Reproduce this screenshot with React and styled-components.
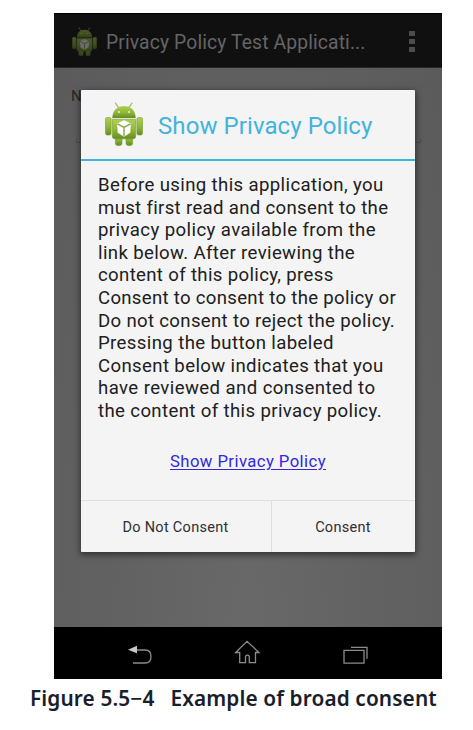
import React from 'react';
import styled, { createGlobalStyle } from 'styled-components';

const GlobalStyle = createGlobalStyle`
  * { box-sizing: border-box; }
  body { margin: 0; background: #fff; overflow: hidden; }
`;

const Page = styled.main`
  width: 473px;
  height: 730px;
  padding: 13px 0 0 54px;
  background: #fff;
  font-family: Roboto, 'Liberation Sans', sans-serif;
`;

const Phone = styled.section`
  position: relative;
  display: flex;
  flex-direction: column;
  width: 387.5px;
  height: 665.5px;
  background: #000;
`;

const ActionBar = styled.header`
  display: flex;
  align-items: center;
  height: 55px;
  padding: 2px 27px 0 18px;
  background: #101010;
  border-top: 1px solid #000;
  border-bottom: 1px solid #272727;
`;

const AppTitle = styled.h1`
  flex: 1;
  margin: 2px 0 0 9px;
  color: #656565;
  font-size: 19.3px;
  font-weight: 400;
  line-height: 24px;
  letter-spacing: ${({ $spacing }) => $spacing}px;
  white-space: nowrap;
`;

const Overflow = styled.div`
  display: grid;
  gap: 3px;
`;

const OverflowDot = styled.i`
  width: 6px;
  height: 5px;
  background: #4c4c4c;
`;

const Content = styled.div`
  flex: 1;
  padding: 18px 17px 0;
  background: radial-gradient(ellipse at 50% 100%, #686868 0%, #616161 55%, #5b5b5b 100%);
`;

const FieldLabel = styled.div`
  color: #262626;
  font-size: 15px;
  line-height: 20px;
`;

const FieldLine = styled.div`
  height: 4px;
  margin: 33px 4px 0 5px;
  border: 1px solid #4c4c4c;
  border-top: 0;
`;

const NavBar = styled.nav`
  height: 51.5px;
  background: #000;
`;

const NavIcons = styled.svg`
  display: block;
  width: 387px;
  height: 51px;
  fill: none;
  stroke: #8c8c8c;
  stroke-width: 1.3;
`;

const Dialog = styled.section`
  position: absolute;
  left: 27px;
  top: 77px;
  display: flex;
  flex-direction: column;
  width: 334px;
  height: 461.5px;
  background: #f4f4f4;
  border-radius: 1px;
  box-shadow: 0 2px 6px 1px rgba(0, 0, 0, 0.5);
`;

const DialogHeader = styled.header`
  display: flex;
  align-items: center;
  height: 71px;
  padding-left: 24px;
  border-bottom: 2px solid #3fb4df;
`;

const DialogTitle = styled.h2`
  margin: 2px 0 0 15px;
  color: #43b3dc;
  font-size: 24px;
  font-weight: 400;
  line-height: 30px;
  letter-spacing: 0.08px;
  white-space: nowrap;
`;

const DialogBody = styled.div`
  flex: 1;
  padding: 13px 17px 0;
`;

const Message = styled.p`
  margin: 0;
  color: #202020;
  font-size: 18.6px;
  line-height: 22.6px;
`;

const MessageLine = styled.span`
  display: block;
  white-space: nowrap;
  letter-spacing: ${({ $spacing }) => $spacing}px;
`;

const PolicyLink = styled.a`
  display: block;
  margin-top: 28px;
  color: #3128e0;
  font-size: 16.7px;
  line-height: 22px;
  letter-spacing: 0.42px;
  text-align: center;
  text-decoration: underline;
  text-underline-offset: 2px;
`;

const Actions = styled.footer`
  display: grid;
  grid-template-columns: 191px 1fr;
  height: 52px;
  border-top: 1px solid #dedede;
`;

const ActionButton = styled.button`
  padding: 3px 1px 0 0;
  border: 0;
  border-right: ${({ $divided }) => ($divided ? '1px solid #dedede' : '0')};
  background: transparent;
  color: #303030;
  font: 14.5px Roboto, 'Liberation Sans', sans-serif;
  letter-spacing: ${({ $spacing }) => $spacing}px;
`;

const Caption = styled.p`
  display: flex;
  gap: 16px;
  margin: 6px 0 0 -24px;
  color: #17202a;
  font: 600 20.8px 'Noto Sans', sans-serif;
  line-height: 27px;
  letter-spacing: 0.12px;
  white-space: nowrap;
`;

const Robot = styled.svg`
  flex: none;
  display: block;
  width: ${({ $width }) => $width}px;
  height: ${({ $width }) => $width * 1.16}px;
  opacity: ${({ $dim }) => ($dim ? 0.38 : 1)};
`;

function AndroidIcon({ id, width, dim }) {
  return (
    <Robot $width={width} $dim={dim} viewBox="0 0 38 44" aria-hidden="true">
      <defs>
        <linearGradient id={id} x1="0" y1="0" x2="0" y2="1">
          <stop offset="0" stopColor="#afd052" />
          <stop offset="0.55" stopColor="#8eb735" />
          <stop offset="1" stopColor="#668a26" />
        </linearGradient>
      </defs>
      <path d="M10.5 1l3.4 5M27 1l-3.5 5" stroke="#a5bf65" strokeWidth="1.3" strokeLinecap="round" />
      <path d="M7.3 16C7.5 8.2 12.6 4 19 4s11.5 4.2 11.7 12z" fill={`url(#${id})`} />
      <circle cx="14" cy="10" r="1" fill="#edf4d4" />
      <circle cx="24" cy="10" r="1" fill="#edf4d4" />
      <g fill={`url(#${id})`} stroke="#779b32" strokeWidth="0.6">
        <rect x="0.5" y="15.5" width="5.6" height="17.5" rx="1.7" />
        <rect x="31.9" y="15.5" width="5.6" height="17.5" rx="1.7" />
        <rect x="10.4" y="30" width="6.6" height="13.5" rx="2.3" />
        <rect x="21" y="30" width="6.6" height="13.5" rx="2.3" />
        <path d="M7.3 17.2h23.4v17q0 2.6-2.6 2.6H9.9q-2.6 0-2.6-2.6z" />
      </g>
      <path d="M19 18.3l7 3.2-.8 9.3-6.2 4-6.2-4-.8-9.3z" fill="#fff" />
      <path d="M12.4 21.8L19 25.4l6.6-3.6M19 25.4v8.8" fill="none" stroke="#88a746" strokeWidth="1.4" />
    </Robot>
  );
}

const messageLines = [
  ['Before using this application, you', 0.37],
  ['must first read and consent to the', 0.32],
  ['privacy policy available from the', 0.41],
  ['link below. After reviewing the', 0.36],
  ['content of this policy, press', 0.34],
  ['Consent to consent to the policy or', 0.3],
  ['Do not consent to reject the policy.', 0.33],
  ['Pressing the button labeled', 0.38],
  ['Consent below indicates that you', 0.37],
  ['have reviewed and consented to', 0.41],
  ['the content of this privacy policy.', 0.37],
];

export default function App() {
  return (
    <>
      <GlobalStyle />
      <Page>
        <Phone>
          <ActionBar>
            <AndroidIcon id="bar-robot" width={25} dim />
            <AppTitle $spacing={0.13}>Privacy Policy Test Applicati...</AppTitle>
            <Overflow><OverflowDot /><OverflowDot /><OverflowDot /></Overflow>
          </ActionBar>
          <Content>
            <FieldLabel>N</FieldLabel>
            <FieldLine />
          </Content>
          <NavBar>
            <NavIcons viewBox="0 0 387 51" aria-hidden="true">
              <path d="M81 23h10q6 0 6 6.5T91 36H79" />
              <path d="M74 22.7l9-4v7.5z" fill="#c8c8c8" stroke="none" />
              <path d="M181.7 25.5L193 14.3l12 11.2h-3.5v10.2h-6.2v-6.5q-1.9-2-3.8 0v6.5h-5.8V25.5z" />
              <path d="M290 23.4h20v12.8h-20z" />
              <path d="M297 20.4h16v11.4" />
            </NavIcons>
          </NavBar>
          <Dialog role="dialog" aria-label="Show Privacy Policy">
            <DialogHeader>
              <AndroidIcon id="dialog-robot" width={38} />
              <DialogTitle>Show Privacy Policy</DialogTitle>
            </DialogHeader>
            <DialogBody>
              <Message>
                {messageLines.map(([text, spacing]) => (
                  <MessageLine key={text} $spacing={spacing}>{text}</MessageLine>
                ))}
              </Message>
              <PolicyLink>Show Privacy Policy</PolicyLink>
            </DialogBody>
            <Actions>
              <ActionButton $divided $spacing={0.3}>Do Not Consent</ActionButton>
              <ActionButton $spacing={0.3}>Consent</ActionButton>
            </Actions>
          </Dialog>
        </Phone>
        <Caption><span>Figure 5.5−4</span><span>Example of broad consent</span></Caption>
      </Page>
    </>
  );
}
